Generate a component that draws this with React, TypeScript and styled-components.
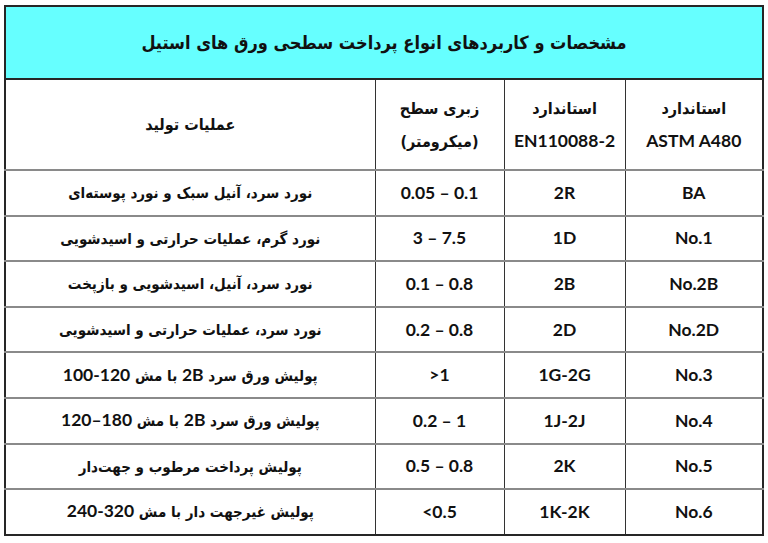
import React from 'react';
import styled, { createGlobalStyle } from 'styled-components';

const GlobalStyle = createGlobalStyle`
  html, body {
    margin: 0;
    padding: 0;
    background: #ffffff;
  }
  body {
    font-family: Lato, "DejaVu Sans Condensed", "DejaVu Sans", sans-serif;
  }
`;

const Page = styled.div`
  padding: 5px 5px 0 4px;
`;

const Table = styled.table`
  direction: rtl;
  width: 760px;
  border-collapse: collapse;
  table-layout: fixed;
  border: 2px solid #262626;
  color: #111;
  font-weight: 700;
`;

const TitleCell = styled.th`
  height: 71px;
  background-color: #66ffff;
  font-weight: 700;
  text-align: center;
  border-bottom: 2px solid #262626;
  padding: 0;
`;

const HeadCell = styled.th`
  height: 89px;
  font-size: 17.5px;
  font-weight: 700;
  line-height: 32px;
  text-align: center;
  padding: 0;
  border-left: 1px solid #333;
  border-bottom: 2px solid #8a8a8a;
  &:last-child {
    border-left: none;
  }
`;

const Cell = styled.td`
  height: 43.6px;
  font-size: 17.5px;
  line-height: 20px;
  text-align: center;
  padding: 0;
  border-left: 1px solid #333;
  border-bottom: 2px solid #8a8a8a;
  &:last-child {
    border-left: none;
  }
`;

const Row = styled.tr`
  &:last-child td {
    border-bottom: none;
  }
`;

// Persian runs use the condensed face, sized to the width of the original
const Fa = styled.span<{ $size?: number }>`
  font-family: "DejaVu Sans Condensed", "DejaVu Sans", sans-serif;
  font-size: ${p => p.$size ?? 15}px;
`;

const Ltr = styled.span`
  direction: ltr;
  unicode-bidi: isolate;
`;

interface FinishRow {
  astm: string;
  en: string;
  roughness: string;
  process: React.ReactNode;
}

const rows: FinishRow[] = [
  { astm: 'BA', en: '2R', roughness: '0.05 – 0.1', process: <Fa>نورد سرد، آنیل سبک و نورد پوسته‌ای</Fa> },
  { astm: 'No.1', en: '1D', roughness: '3 – 7.5', process: <Fa>نورد گرم، عملیات حرارتی و اسیدشویی</Fa> },
  { astm: 'No.2B', en: '2B', roughness: '0.1 – 0.8', process: <Fa>نورد سرد، آنیل، اسیدشویی و بازپخت</Fa> },
  { astm: 'No.2D', en: '2D', roughness: '0.2 – 0.8', process: <Fa>نورد سرد، عملیات حرارتی و اسیدشویی</Fa> },
  {
    astm: 'No.3', en: '1G-2G', roughness: '>1',
    process: <><Fa>پولیش ورق سرد </Fa>2B<Fa> با مش </Fa><Ltr>100-120</Ltr></>,
  },
  {
    astm: 'No.4', en: '1J-2J', roughness: '0.2 – 1',
    process: <><Fa>پولیش ورق سرد </Fa>2B<Fa> با مش </Fa><Ltr>120–180</Ltr></>,
  },
  { astm: 'No.5', en: '2K', roughness: '0.5 – 0.8', process: <Fa>پولیش پرداخت مرطوب و جهت‌دار</Fa> },
  {
    astm: 'No.6', en: '1K-2K', roughness: '<0.5',
    process: <><Fa>پولیش غیرجهت دار با مش </Fa><Ltr>240-320</Ltr></>,
  },
];

const App: React.FC = () => {
  return (
    <Page>
      <GlobalStyle />
      <Table>
        <colgroup>
          <col style={{ width: 138 }} />
          <col style={{ width: 121 }} />
          <col style={{ width: 129 }} />
          <col />
        </colgroup>
        <thead>
          <tr>
            <TitleCell colSpan={4}>
              <Fa $size={18}>مشخصات و کاربردهای انواع پرداخت سطحی ورق های استیل</Fa>
            </TitleCell>
          </tr>
          <tr>
            <HeadCell>
              <Fa $size={16}>استاندارد</Fa>
              <br />
              <Ltr>ASTM A480</Ltr>
            </HeadCell>
            <HeadCell>
              <Fa $size={16}>استاندارد</Fa>
              <br />
              <Ltr>EN110088-2</Ltr>
            </HeadCell>
            <HeadCell>
              <Fa $size={16}>زبری سطح</Fa>
              <br />
              <Fa $size={16}>(میکرومتر)</Fa>
            </HeadCell>
            <HeadCell>
              <Fa $size={16}>عملیات تولید</Fa>
            </HeadCell>
          </tr>
        </thead>
        <tbody>
          {rows.map((row, i) => (
            <Row key={i}>
              <Cell><Ltr>{row.astm}</Ltr></Cell>
              <Cell><Ltr>{row.en}</Ltr></Cell>
              <Cell><Ltr>{row.roughness}</Ltr></Cell>
              <Cell>{row.process}</Cell>
            </Row>
          ))}
        </tbody>
      </Table>
    </Page>
  );
};

export default App;
